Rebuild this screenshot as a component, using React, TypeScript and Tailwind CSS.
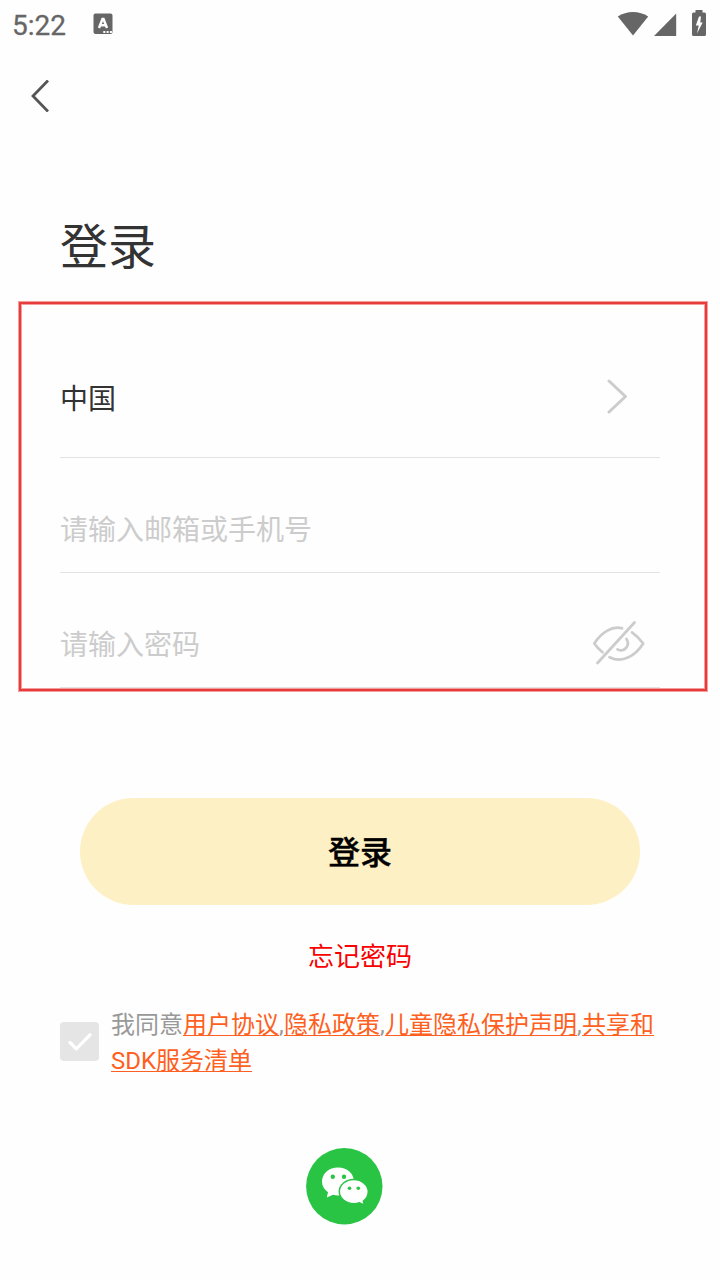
import { useState } from "react"

const agreements = ["用户协议", "隐私政策", "儿童隐私保护声明", "共享和SDK服务清单"]

function StatusBar() {
  return (
    <div className="h-12 pl-3 pr-3.5 flex items-center text-[#666666]">
      <span className="w-[54px] text-[28px] leading-none pt-[3px] [-webkit-text-stroke:0.3px_#666666]">5:22</span>
      <svg className="ml-[27px] w-5 h-[22px]" viewBox="0 0 20 22">
        <rect x="0.5" y="0.5" width="19" height="20.5" rx="2" fill="currentColor" />
        <path d="M6 15 9.500 6h1l3.500 9M7.200 12.300h5.600" fill="none" stroke="#fefefe" strokeWidth="2.500" />
        <path d="M10.3 18h2v2h-2zM13.6 18h2v2h-2zM16.900 18h2v2h-2z" fill="#fefefe" />
      </svg>
      <svg className="ml-auto w-8 h-6" viewBox="0 0 32 24">
        <path d="M0.8 4.6C9.5-1.5 22.500-1.500 31.200 4.600L16 23.500z" fill="currentColor" />
      </svg>
      <svg className="ml-[5px] w-[23px] h-6" viewBox="0 0 23 24">
        <path d="M0 24 22.200 1.500V24z" fill="currentColor" />
      </svg>
      <svg className="ml-[15px] mb-0.5 w-3.5 h-[26px]" viewBox="0 0 14 26">
        <path d="M3.500 0h7v2.500h2q1.500 0 1.500 1.500v20.500q0 1.500-1.500 1.500h-11Q0 26 0 24.500V4q0-1.500 1.500-1.500h2z" fill="currentColor" />
        <path d="M9 6.500H7L3.800 15.500h2.900L5 23.500 10.700 12.500H8.300z" fill="#fefefe" />
      </svg>
    </div>
  )
}

function WechatIcon() {
  return (
    <svg className="w-[77px] h-[77px]" viewBox="0 0 77 77">
      <circle cx="38.300" cy="38.300" r="38.200" fill="#2ac445" />
      <path d="M32 19.500c-9 0-16 6.100-16 14 0 4.500 2.300 8.200 6 10.700L20.800 49.500 27 46.800c1.600.5 3.300.8 5 .8 9 0 16-6.200 16-14.100s-7-14-16-14z" fill="#fff" />
      <path d="M47.800 31.500c8 0 14.500 5.500 14.500 12.300 0 3.900-1.900 7-5 9.300l1.100 4-5-2.300c-1.700.6-3.500.9-5.600.9-8 0-14.500-5.400-14.500-12.100S39.800 31.500 47.800 31.500z" fill="#fff" stroke="#2ac445" strokeWidth="1.500" />
      <g fill="#2ac445">
        <circle cx="26.800" cy="28.800" r="2.200" />
        <circle cx="38" cy="28.800" r="2.200" />
        <circle cx="43.500" cy="40.300" r="1.800" />
        <circle cx="52.300" cy="40.300" r="1.800" />
      </g>
    </svg>
  )
}

export default function App() {
  const [account, setAccount] = useState("")
  const [password, setPassword] = useState("")

  return (
    <div className="w-full h-[1280px] bg-[#fefefe] text-[#333333] flex flex-col overflow-hidden font-[Roboto,'Noto_Sans_CJK_SC',sans-serif]">
      <StatusBar />

      <header className="h-24 pl-[31px] flex items-center">
        <button aria-label="返回">
          <svg className="w-[18px] h-8" viewBox="0 0 18 32">
            <path d="M17 0.500 2 16l15 15.500" fill="none" stroke="#555555" strokeWidth="2.800" />
          </svg>
        </button>
      </header>

      <h1 className="mt-[69px] ml-[60px] text-5xl leading-[70px]">登录</h1>

      {/* Account form */}
      <form className="mt-[19px] ml-[19px] w-[688px] h-[389px] border-2 border-[#e83c3c] shadow-[0_0_0_1px_#f49d9d,inset_0_0_0_1px_#f49d9d] pt-[33px] px-[39px] text-[28px]">
        <div className="w-[600px] h-[121px] border-b border-[#e3e3e3] flex items-center justify-between">
          <span className="pt-1.5 leading-10">中国</span>
          <svg className="mr-8 mb-0.5 w-[22px] h-9" viewBox="0 0 22 36">
            <path d="M3 3 19.500 18.500 3 34" fill="none" stroke="#cccccc" strokeWidth="3" strokeLinecap="round" strokeLinejoin="round" />
          </svg>
        </div>
        <div className="w-[600px] h-[115px] pt-[26px] border-b border-[#e3e3e3] flex items-center">
          <input
            className="w-full h-11 pt-1 outline-none placeholder:text-[#cccccc]"
            placeholder="请输入邮箱或手机号"
            value={account}
            onChange={(e) => setAccount(e.target.value)}
          />
        </div>
        <div className="w-[600px] h-[115px] pt-[26px] border-b border-[#e3e3e3] flex items-center justify-between">
          <input
            type="password"
            className="w-[480px] h-11 pt-1 outline-none placeholder:text-[#cccccc]"
            placeholder="请输入密码"
            value={password}
            onChange={(e) => setPassword(e.target.value)}
          />
          <svg className="mr-3.5 w-[54px] h-11" viewBox="0 0 54 44" fill="none" stroke="#cccccc" strokeWidth="2.700" strokeLinecap="round" strokeLinejoin="round">
            <path d="M5.500 42 42.500 1.500" />
            <path d="M30 7.300C20 4.500 9 12 2.300 22.500c2.600 3.700 5.300 6.400 8.200 8.800" />
            <path d="M40 11.300c4.400 3 8 7 11.200 11.200C43 35.500 30 42.500 17.500 36.200" />
            <path d="M34.500 18c4.200 6.600-2.500 14-9 10.300" />
          </svg>
        </div>
      </form>

      <button className="mt-[107px] mx-20 h-[107px] pt-0.5 shrink-0 rounded-full bg-[#fef0c5] text-black text-[32px] font-medium [-webkit-text-stroke:0.4px_black]">登录</button>

      <a href="#" className="mt-[33px] self-center text-[26px] leading-[38px] text-[#fa0000]">忘记密码</a>

      <div className="mt-[31px] ml-[60px] flex">
        <div className="mt-[15px] w-[39px] h-[39px] shrink-0 rounded bg-[#e5e5e5] flex items-center justify-center">
          <svg className="w-6 h-[18px]" viewBox="0 0 24 18">
            <path d="M2 9.500 8.300 15.800 22 1.800" fill="none" stroke="#fff" strokeWidth="3.200" strokeLinecap="round" strokeLinejoin="round" />
          </svg>
        </div>
        <p className="ml-3 w-[546px] text-2xl leading-9 text-[#999999] break-all">
          我同意
          {agreements.map((name, i) => (
            <span key={name}>
              {i > 0 && <span className="tracking-[0.3px]">,</span>}
              <a href="#" className="text-[#ff5f20] underline decoration-1 underline-offset-2 [text-decoration-skip-ink:none]">{name}</a>
            </span>
          ))}
        </p>
      </div>

      <button aria-label="微信登录" className="mt-[69px] ml-[306px] w-[77px]">
        <WechatIcon />
      </button>
    </div>
  )
}
